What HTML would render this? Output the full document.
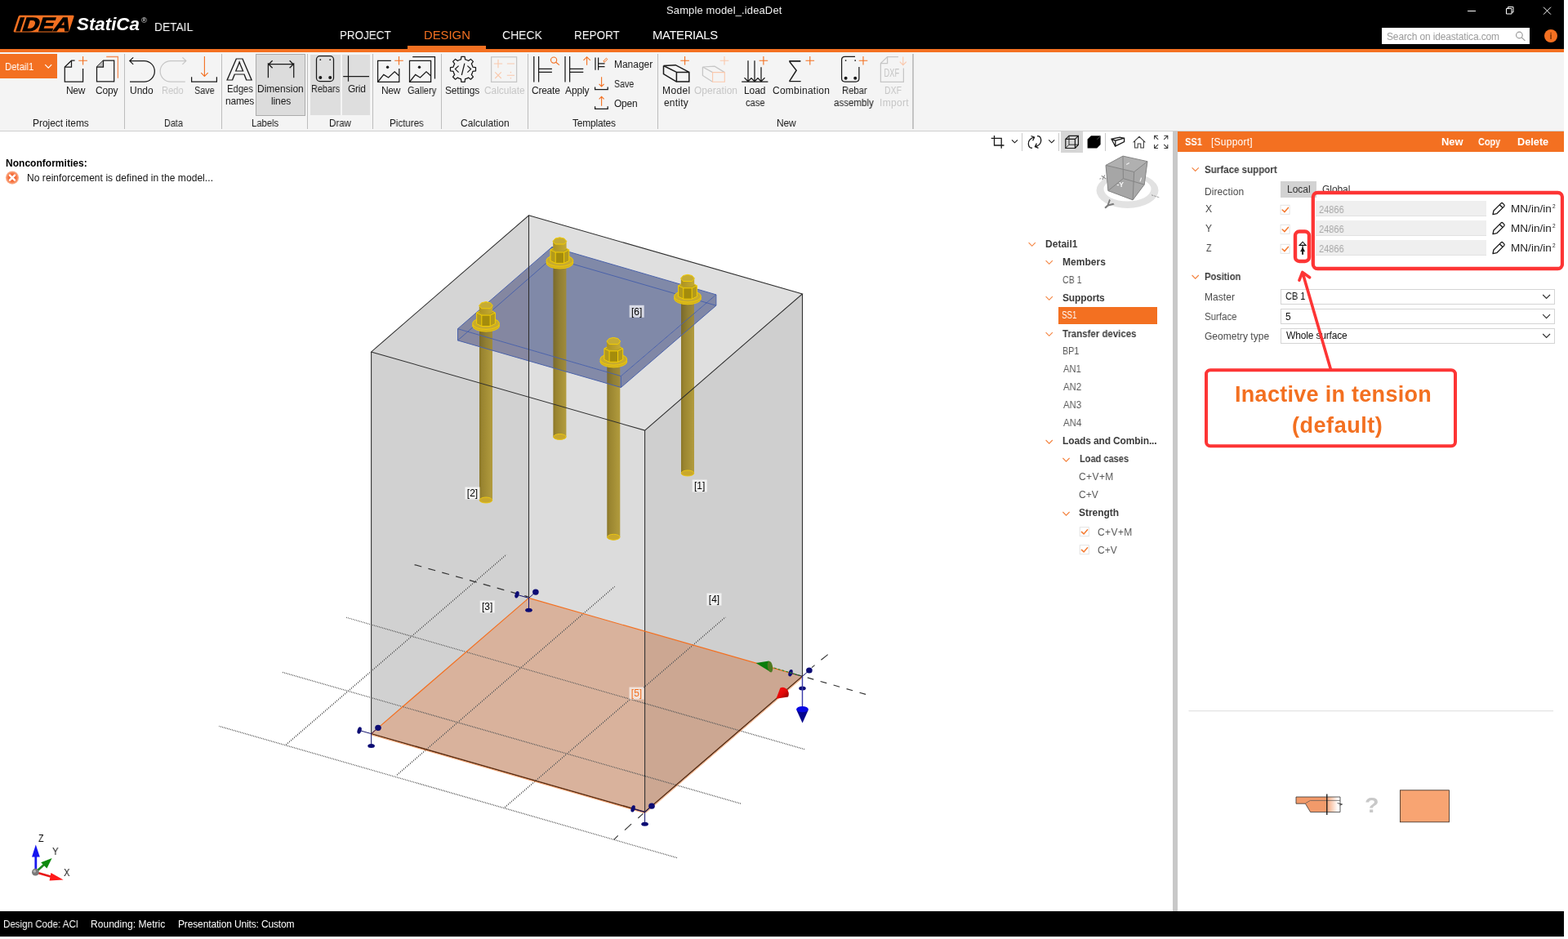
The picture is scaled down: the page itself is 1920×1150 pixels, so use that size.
<!DOCTYPE html>
<html lang="en">
<head>
<meta charset="utf-8">
<title>Sample model_.ideaDet - IDEA StatiCa Detail</title>
<style>
*{box-sizing:content-box}
html,body{margin:0;padding:0;background:#fff}
body{width:1920px;height:1150px;position:relative;overflow:hidden;font-family:"Liberation Sans",sans-serif;font-size:12px;color:#000}
#app{position:absolute;left:0;top:0;width:1915px;height:1147px;overflow:hidden;background:#fff}
.t,svg{will-change:transform}
#app>*,#app div,#app span,#app a,#app sup,#app svg,#app nav{position:absolute}
.t{white-space:nowrap;line-height:1;margin:0;padding:0;text-decoration:none;transform-origin:0 0}
svg{overflow:visible}
svg text{font-family:"Liberation Sans",sans-serif}
#splitter{left:1435.6px;top:161px;width:6.2px;height:955px;background:#c8c8c8}
</style>
</head>
<body>
<div id="app">
<header id="titlebar" style="left:0px;top:0px;width:1915px;height:64px;background:#000;">
<div style="left:0px;top:60px;width:1915px;height:4px;background:#f37021;"></div>
<svg class="a" style="left:0px;top:0px;" width="200" height="60" viewBox="0 0 200 60" ><g transform="translate(12.88 0) skewX(-18.1)"><rect x="16.2" y="18.8" width="68.1" height="20.6" rx="1.6" fill="#f37021"/><text x="17.8" y="37.9" font-size="23.4" font-weight="700" fill="#000" stroke="#000" stroke-width="1.2" stroke-linejoin="miter" textLength="66.2" lengthAdjust="spacingAndGlyphs">IDEA</text></g></svg>
<span class="t logo" style="left:94.14px;top:19.25px;font-size:21.2px;font-weight:700;color:#fff;font-style:italic;transform:scaleX(1.0536);">StatiCa</span>
<span class="t" style="left:172.6px;top:19.96px;font-size:9.5px;color:#e6e6e6;">®</span>
<span class="t" style="left:188.72px;top:26.17px;font-size:14.8px;color:#fff;transform:scaleX(0.9316);">DETAIL</span>
<span class="t wtitle" style="left:816.4px;top:5.7px;font-size:13px;color:#f0f0f0;letter-spacing:0.13px;">Sample model_.ideaDet</span>
<nav id="tabs" style="left:400px;top:28px;width:500px;height:32px;">
<a class="t tab" style="left:16.03px;top:8.17px;font-size:14.8px;color:#fff;transform:scaleX(0.9083);">PROJECT</a>
<a class="t tab" style="left:119.4px;top:8.17px;font-size:14.8px;color:#f37021;letter-spacing:0.02px;">DESIGN</a>
<a class="t tab" style="left:215.22px;top:8.17px;font-size:14.8px;color:#fff;transform:scaleX(0.9428);">CHECK</a>
<a class="t tab" style="left:303.43px;top:8.17px;font-size:14.8px;color:#fff;transform:scaleX(0.9077);">REPORT</a>
<a class="t tab" style="left:399.4px;top:8.17px;font-size:14.8px;color:#fff;letter-spacing:-0.34px;">MATERIALS</a>
<div style="left:99px;top:28px;width:96px;height:4px;background:#f37021;"></div>
</nav>

<svg class="a" style="left:1780px;top:0px;" width="135" height="30" viewBox="1780 0 135 30" ><g fill="none" stroke="#fff" stroke-width="1"><path d="M1797 13.5H1807"/><path d="M1844.5 10.5h6.5v6.5h-6.5z M1846.5 10.5v-2h6.5v6.5h-2"/><path d="M1890 8.7l9 9M1899 8.7l-9 9"/></g></svg>
<div class="search" style="left:1692px;top:34px;width:181px;height:20px;background:#fff;"></div>
<span class="t" style="left:1697.7px;top:38.64px;font-size:12px;color:#9b9b9b;letter-spacing:-0.14px;">Search on ideastatica.com</span>
<svg class="a" style="left:1850px;top:30px;" width="65" height="30" viewBox="1850 30 65 30" ><g fill="none" stroke="#9a9a9a" stroke-width="1.2"><circle cx="1860.4" cy="43" r="3.8"/><path d="M1863.2 45.9l4.2 4"/></g><circle cx="1899" cy="44" r="8" fill="#f37021"/><text x="1899.1" y="48.2" text-anchor="middle" font-size="11.2" font-weight="700" fill="#7a3205">i</text></svg>
</header>
<section id="ribbon" style="left:0px;top:64px;width:1915px;height:97px;background:#f4f4f4;">
<div style="left:0px;top:96px;width:1915px;height:1px;background:#cfcfcf;"></div>
<div class="combo" style="left:0px;top:2px;width:70px;height:30px;background:#f37021;"></div>
<span class="t" style="left:6.12px;top:12.04px;font-size:12px;color:#fff;transform:scaleX(0.9428);">Detail1</span>
<div style="left:313px;top:2px;width:61px;height:76px;background:#dcdcdc;border:1px solid #ababab;box-sizing:border-box;"></div>
<div style="left:380px;top:3px;width:37px;height:74px;background:#dedede;"></div>
<div style="left:419px;top:3px;width:34px;height:74px;background:#dedede;"></div>
<div style="left:152px;top:2px;width:1px;height:91.5px;background:#bdbdbd;"></div>
<div style="left:271px;top:2px;width:1px;height:91.5px;background:#bdbdbd;"></div>
<div style="left:376px;top:2px;width:1px;height:91.5px;background:#bdbdbd;"></div>
<div style="left:456px;top:2px;width:1px;height:91.5px;background:#bdbdbd;"></div>
<div style="left:540px;top:2px;width:1px;height:91.5px;background:#bdbdbd;"></div>
<div style="left:646px;top:2px;width:1px;height:91.5px;background:#bdbdbd;"></div>
<div style="left:805px;top:2px;width:1px;height:91.5px;background:#bdbdbd;"></div>
<div style="left:1117px;top:2px;width:2px;height:91.5px;background:#c4c4c4;"></div>
<svg class="a" style="left:0px;top:0px;" width="1915" height="97" viewBox="0 64 1915 97" ><g fill="none" stroke="#1a1a1a" stroke-width="1.25" stroke-linejoin="miter"><path d="M91.6 74.2H87.5L79.3 82V100.1H101.6V84"/><path d="M87.5 74.2V82H79.3"/><path d="M126.5 74.2H139.7V99.8H118.5V82Z"/><path d="M126.5 74.2V82H118.5" fill="#bdbdbd"/><path d="M163.2 70.4L158.8 74.6L163.2 78.9M158.8 74.6H176.6A12.75 12.75 0 0 1 176.6 100.1H159"/><path d="M234.6 94.3V100.1H265.4V94.3"/><path d="M328.4 77.2V95.3M359.7 77.2V95.3M328.8 78.7H359.3M333.6 74.2L329 78.7L333.6 83.2M354.6 74.2L359.2 78.7L354.6 83.2"/><rect x="387.5" y="68.6" width="21" height="31" rx="4.2"/><path d="M426.5 68.3V99.7M420.2 93.5H452"/><path d="M478.8 74.3H462.6V100.3H488.8V84"/><path d="M462.9 100L469.8 91.4L475.6 95L483.2 87.8L488.6 92.8"/><path d="M501.5 74.3H527.6V100.3H501.5Z"/><path d="M501.8 100L508.7 91.4L514.5 95L522 87.8L527.4 92.8"/><path d="M505.2 69.5H532.5V96.5"/><path d="M564.4 72.9L564.9 69.3L569.1 69.3L569.6 72.9A12.2 12.2 0 0 1 573.6 74.5L576.4 72.4L579.4 75.4L577.3 78.2A12.2 12.2 0 0 1 578.9 82.2L582.5 82.7L582.5 86.9L578.9 87.4A12.2 12.2 0 0 1 577.3 91.4L579.4 94.2L576.4 97.2L573.6 95.1A12.2 12.2 0 0 1 569.6 96.7L569.1 100.3L564.9 100.3L564.4 96.7A12.2 12.2 0 0 1 560.4 95.1L557.6 97.2L554.6 94.2L556.7 91.4A12.2 12.2 0 0 1 555.1 87.4L551.5 86.9L551.5 82.7L555.1 82.2A12.2 12.2 0 0 1 556.7 78.2L554.6 75.4L557.6 72.4L560.4 74.5A12.2 12.2 0 0 1 564.4 72.9Z" stroke-linejoin="round"/><path d="M561.6 80.6L557.4 84.6L561.6 88.6M572.4 80.6L576.6 84.6L572.4 88.6M568.9 77.6L565.3 92"/><path d="M653.8 69V100.5M659.6 69V100.5M659.6 84.4H675.9M659.6 88.4H675.9"/><path d="M692 69V100.5M697.6 69V100.5M697.6 84.4H714.3M697.6 88.4H714.3"/><path d="M729 70.5V85.8M732.6 70.5V85.8M732.6 77.8H740.5M732.6 81.6H740.5"/><path d="M728.6 106.6V109.6H744.2V106.6"/><path d="M728.6 130.2V133.3H744.2V130.2"/><path d="M828.4 88.4H843.8V100.1H828.4Z M812.5 80.5L827.2 79.7L843.8 88.4M812.5 80.5L828.4 88.4M812.5 80.5V90.6L828.4 100.1" stroke-width="1.5"/><path d="M916 74.2V99.4M924 74.2V99.4M932 82.2V99.4M908.2 100.1H940.4M911.5 95.2L916 99.6L920 95.7L924 99.6L928 95.7L932 99.6L936.5 95.2"/><path d="M1047 69.3H1034.6Q1030.6 69.3 1030.6 73.3V96.1Q1030.6 100.1 1034.6 100.1H1047.9Q1051.9 100.1 1051.9 96.1V82"/></g><text transform="translate(276.9 97.6) scale(1.19 1)" font-size="37.6" font-weight="700" fill="none" stroke="#1a1a1a" stroke-width="1.15" stroke-linejoin="miter">A</text><text transform="translate(963.2 100.2) scale(0.87 1)" style="font-family:'DejaVu Sans Light','DejaVu Sans',sans-serif;font-weight:200" font-size="35.2" fill="#1a1a1a">Σ</text><g fill="#1a1a1a"><circle cx="392.3" cy="73.2" r="0.9"/><circle cx="404.2" cy="73.2" r="0.9"/><circle cx="392.3" cy="95" r="2"/><circle cx="404.2" cy="95" r="2"/><circle cx="474.6" cy="82.3" r="1.7"/><circle cx="513.5" cy="82.3" r="1.7"/><circle cx="1035.6" cy="74.1" r="0.9"/><circle cx="1047.2" cy="74.1" r="0.9"/><circle cx="1035.6" cy="95.7" r="2"/><circle cx="1047.2" cy="95.7" r="2"/></g><g fill="none" stroke="#c6c6c6" stroke-width="1.25"><path d="M223.4 70.4L227.8 74.6L223.4 78.9M227.8 74.6H208.9A12.75 12.75 0 0 0 208.9 100.1H226.8"/><rect x="601.6" y="69.8" width="31" height="30.6"/><path d="M860.4 82L875 81.2L887.3 88.6M860.4 82L872.6 88.6M860.4 82V92.5L872.6 100.2"/><path d="M1100 69.6H1086.6L1078.4 77.6V100.3H1106.4V83.5"/><path d="M1086.6 69.6V77.6H1078.4"/></g><g fill="none" stroke="#f37021" stroke-width="1.1"><path d="M250.4 69V93.3M246.2 89.2L250.4 93.5L254.7 89.2"/><path d="M130.2 69.5H144.4V95.7" stroke="#f5905a" stroke-width="1.3"/><circle cx="678.1" cy="73.6" r="3.6"/><path d="M680.7 76.2L684.9 79.6"/><path d="M718.6 79.8V69.6M714.5 73.9L718.6 69.7L722.8 73.9"/><path d="M736.6 94.3V105.8M733.6 102.9L736.6 106L739.6 102.9"/><path d="M736.6 129.7V118.5M733.6 121.4L736.6 118.3L739.6 121.4"/><path d="M738.8 75L742.4 71.2L743.8 72.5L740.2 76.3Z" stroke-width="1"/></g><path d="M96.3 74.3H106.9M101.6 69V79.6" stroke="#f37021" stroke-width="1.1" fill="none"/><path d="M483.2 74.3H493.8M488.5 69V79.6" stroke="#f37021" stroke-width="1.1" fill="none"/><path d="M833.3 74.3H843.9M838.6 69V79.6" stroke="#f37021" stroke-width="1.1" fill="none"/><path d="M929.6 74.3H940.2M934.9 69V79.6" stroke="#f37021" stroke-width="1.1" fill="none"/><path d="M986.5 74.3H997.1M991.8 69V79.6" stroke="#f37021" stroke-width="1.1" fill="none"/><path d="M1051.7 74.3H1062.3M1057 69V79.6" stroke="#f37021" stroke-width="1.1" fill="none"/><g fill="none" stroke="#fac8ac" stroke-width="1.1"><path d="M604.8 78H615.2M610 72.8V83.2M620.8 78H630M606.2 88.4L613.8 96M613.8 88.4L606.2 96M620.8 92.2H630"/><path d="M872.6 88.6H887.3V100.2H872.6Z"/><path d="M1105.8 69.5V79.5M1101.8 75.6L1105.8 79.7L1109.8 75.6"/></g><circle cx="625.4" cy="88.6" r="0.8" fill="#fac8ac"/><circle cx="625.4" cy="95.8" r="0.8" fill="#fac8ac"/><path d="M881.7 74.3H892.3M887 69V79.6" stroke="#fac8ac" stroke-width="1.1" fill="none"/><text x="1082.6" y="93.9" font-size="14.6" fill="#c6c6c6" textLength="18.6" lengthAdjust="spacingAndGlyphs">DXF</text><path d="M55.2 79.2L59.2 83.2L63.2 79.2" fill="none" stroke="#fff" stroke-width="1.2"/></svg>
<span class="t rl" style="left:81.4px;top:40.94px;font-size:12px;color:#1a1a1a;letter-spacing:-0.35px;">New</span>
<span class="t rl" style="left:117.2px;top:40.94px;font-size:12px;color:#1a1a1a;letter-spacing:-0.17px;">Copy</span>
<span class="t rl" style="left:159.4px;top:40.94px;font-size:12px;color:#1a1a1a;">Undo</span>
<span class="t rl" style="left:198.32px;top:40.94px;font-size:12px;color:#c6c6c6;transform:scaleX(0.9278);">Redo</span>
<span class="t rl" style="left:237.73px;top:40.94px;font-size:12px;color:#1a1a1a;transform:scaleX(0.8989);">Save</span>
<span class="t rl" style="left:278.02px;top:39.04px;font-size:12px;color:#1a1a1a;transform:scaleX(0.9388);">Edges</span>
<span class="t rl" style="left:276.3px;top:53.64px;font-size:12px;color:#1a1a1a;letter-spacing:-0.2px;">names</span>
<span class="t rl" style="left:315.3px;top:39.04px;font-size:12px;color:#1a1a1a;letter-spacing:0.01px;">Dimension</span>
<span class="t rl" style="left:332.1px;top:53.64px;font-size:12px;color:#1a1a1a;letter-spacing:-0.12px;">lines</span>
<span class="t rl" style="left:381.33px;top:39.04px;font-size:12px;color:#1a1a1a;transform:scaleX(0.9072);">Rebars</span>
<span class="t rl" style="left:425.5px;top:39.04px;font-size:12px;color:#1a1a1a;letter-spacing:-0.23px;">Grid</span>
<span class="t rl" style="left:466.6px;top:40.94px;font-size:12px;color:#1a1a1a;letter-spacing:-0.35px;">New</span>
<span class="t rl" style="left:499.42px;top:40.94px;font-size:12px;color:#1a1a1a;transform:scaleX(0.9284);">Gallery</span>
<span class="t rl" style="left:545.1px;top:40.94px;font-size:12px;color:#1a1a1a;letter-spacing:-0.16px;">Settings</span>
<span class="t rl" style="left:592.5px;top:40.94px;font-size:12px;color:#c6c6c6;letter-spacing:-0.05px;">Calculate</span>
<span class="t rl" style="left:651.3px;top:40.94px;font-size:12px;color:#1a1a1a;letter-spacing:-0.24px;">Create</span>
<span class="t rl" style="left:692.4px;top:40.94px;font-size:12px;color:#1a1a1a;letter-spacing:-0.1px;">Apply</span>
<span class="t rl" style="left:752.3px;top:8.74px;font-size:12px;color:#1a1a1a;letter-spacing:-0.03px;">Manager</span>
<span class="t rl" style="left:752.33px;top:32.54px;font-size:12px;color:#1a1a1a;transform:scaleX(0.8839);">Save</span>
<span class="t rl" style="left:752.3px;top:56.54px;font-size:12px;color:#1a1a1a;letter-spacing:-0.23px;">Open</span>
<span class="t rl" style="left:810.7px;top:40.94px;font-size:12px;color:#1a1a1a;letter-spacing:0.38px;">Model</span>
<span class="t rl" style="left:813.3px;top:56.24px;font-size:12px;color:#1a1a1a;letter-spacing:0.2px;">entity</span>
<span class="t rl" style="left:849.7px;top:40.94px;font-size:12px;color:#c6c6c6;letter-spacing:0.04px;">Operation</span>
<span class="t rl" style="left:911.3px;top:40.94px;font-size:12px;color:#1a1a1a;letter-spacing:-0.07px;">Load</span>
<span class="t rl" style="left:913.42px;top:56.24px;font-size:12px;color:#1a1a1a;transform:scaleX(0.9271);">case</span>
<span class="t rl" style="left:945.5px;top:40.94px;font-size:12px;color:#1a1a1a;letter-spacing:0.26px;">Combination</span>
<span class="t rl" style="left:1030.62px;top:40.94px;font-size:12px;color:#1a1a1a;transform:scaleX(0.9369);">Rebar</span>
<span class="t rl" style="left:1021.41px;top:56.24px;font-size:12px;color:#1a1a1a;transform:scaleX(0.9625);">assembly</span>
<span class="t rl" style="left:1083.44px;top:40.94px;font-size:12px;color:#c6c6c6;transform:scaleX(0.8692);">DXF</span>
<span class="t rl" style="left:1076.6px;top:56.24px;font-size:12px;color:#c6c6c6;letter-spacing:0.32px;">Import</span>
<span class="t gl" style="left:40.1px;top:80.74px;font-size:12px;color:#1a1a1a;letter-spacing:-0.04px;">Project items</span>
<span class="t gl" style="left:200.53px;top:80.74px;font-size:12px;color:#1a1a1a;transform:scaleX(0.9028);">Data</span>
<span class="t gl" style="left:308.12px;top:80.74px;font-size:12px;color:#1a1a1a;transform:scaleX(0.9395);">Labels</span>
<span class="t gl" style="left:403.11px;top:80.74px;font-size:12px;color:#1a1a1a;transform:scaleX(0.9603);">Draw</span>
<span class="t gl" style="left:477.21px;top:80.74px;font-size:12px;color:#1a1a1a;transform:scaleX(0.9649);">Pictures</span>
<span class="t gl" style="left:563.5px;top:80.74px;font-size:12px;color:#1a1a1a;letter-spacing:0.02px;">Calculation</span>
<span class="t gl" style="left:700.7px;top:80.74px;font-size:12px;color:#1a1a1a;letter-spacing:-0.21px;">Templates</span>
<span class="t gl" style="left:950.7px;top:80.74px;font-size:12px;color:#1a1a1a;letter-spacing:-0.2px;">New</span>
</section>
<main id="viewport" style="left:0px;top:161px;width:1436px;height:955px;background:#fff;">
<div class="a" style="left:1352.5px;top:2.4px;width:1px;height:21.5px;background:#c9c9c9"></div>
<div class="a" style="left:1295.5px;top:2.4px;width:1px;height:21.5px;background:#c9c9c9"></div>
<div class="a" style="left:1250.5px;top:2.4px;width:1px;height:21.5px;background:#c9c9c9"></div>
<div class="a" style="left:1298.7px;top:0;width:27px;height:25.6px;background:#d6d6d6"></div>
<svg class="a" style="left:0px;top:0px;" width="1436" height="955" viewBox="0 161 1436 955" id="scene"><defs><linearGradient id="rod" x1="0" x2="1" y1="0" y2="0"><stop offset="0" stop-color="#8a7628"/><stop offset="0.22" stop-color="#9a8530"/><stop offset="1" stop-color="#b29c3e"/></linearGradient><linearGradient id="rodp" x1="0" x2="1" y1="0" y2="0"><stop offset="0" stop-color="#7a6a2c"/><stop offset="0.5" stop-color="#917f34"/><stop offset="1" stop-color="#9f8b3c"/></linearGradient><linearGradient id="tip" x1="0" x2="1" y1="0" y2="0"><stop offset="0" stop-color="#ac9220"/><stop offset="1" stop-color="#c4aa34"/></linearGradient><pattern id="dots" width="2" height="2" patternUnits="userSpaceOnUse"><rect width="1" height="2" fill="#5a5a5a"/></pattern><linearGradient id="redc" x1="0" x2="1" y1="0" y2="1"><stop offset="0" stop-color="#ff1212"/><stop offset="0.55" stop-color="#e00808"/><stop offset="1" stop-color="#7c0000"/></linearGradient></defs><polygon points="647.5,263.8 982.5,359.9 982.5,828.3 789.6,994.5 454.6,898.6 454.6,430.9" fill="#dcdcdc"/><polygon points="454.6,430.9 647.5,263.8 647.5,732.4 454.6,898.6" fill="#d1d1d1"/><polygon points="647.5,263.8 982.5,359.9 789.6,527.1 454.6,430.9" fill="#fff" fill-opacity="0.1"/><polygon points="647.5,732.4 982.5,828.3 789.6,994.5 454.6,898.6" fill="#d9b29c"/><polygon points="789.6,527.1 982.5,359.9 982.5,828.3 789.6,994.5" fill="#000" fill-opacity="0.06"/><g stroke="url(#dots)" stroke-width="1.3" fill="none"><line x1="423.3" y1="756" x2="985" y2="917.7" /><line x1="346" y1="823.3" x2="907.7" y2="984.3" /><line x1="268.3" y1="889.3" x2="829.3" y2="1050.7" /><line x1="350" y1="912.3" x2="620" y2="679.3" /><line x1="485" y1="950" x2="752.7" y2="718.3" /><line x1="616.7" y1="990" x2="888.3" y2="755.7" /></g><g stroke="#333" stroke-width="1.15" fill="none"><line x1="507.6" y1="691.6" x2="646.7" y2="730.9" stroke-dasharray="9 8.5"/><line x1="988.7" y1="829.9" x2="1060.6" y2="850.5" stroke-dasharray="7.9 8.7"/><line x1="993.9" y1="817.6" x2="997.6" y2="814.6" /><line x1="1005.4" y1="808.2" x2="1013.7" y2="801.6" /><line x1="787.5" y1="996.3" x2="781.3" y2="1002" /><line x1="773.1" y1="1009.2" x2="765" y2="1016.7" /><line x1="756.7" y1="1023.3" x2="751.7" y2="1028.3" /></g><path d="M677.4 319.2V535A8.0 3.6 0 0 0 693.4 535V319.2Z" fill="url(#rod)"/><ellipse cx="685.4" cy="535" rx="7.7" ry="3.5" fill="#c9a82c" stroke="#efca10" stroke-width="0.9"/><path d="M834 363V579.5A8.0 3.6 0 0 0 850 579.5V363Z" fill="url(#rod)"/><ellipse cx="842" cy="579.5" rx="7.7" ry="3.5" fill="#c9a82c" stroke="#efca10" stroke-width="0.9"/><path d="M587 396.3V612.5A8.0 3.6 0 0 0 603 612.5V396.3Z" fill="url(#rod)"/><ellipse cx="595" cy="612.5" rx="7.7" ry="3.5" fill="#c9a82c" stroke="#efca10" stroke-width="0.9"/><path d="M743.3 440.1V657.8A8.0 3.6 0 0 0 759.3 657.8V440.1Z" fill="url(#rod)"/><ellipse cx="751.3" cy="657.8" rx="7.7" ry="3.5" fill="#c9a82c" stroke="#efca10" stroke-width="0.9"/><clipPath id="cpl"><polygon points="560.5,402.7 676,302.4 876.9,360.9 876.9,374.2 760.4,474.5 560.5,416.9"/></clipPath><polygon points="560.5,402.7 760.4,460.6 760.4,474.5 560.5,416.9" fill="#838aa8"/><polygon points="760.4,460.6 876.9,360.9 876.9,374.2 760.4,474.5" fill="#8087a6"/><polygon points="560.5,402.7 676,302.4 876.9,360.9 760.4,460.6" fill="#8089a8"/><rect x="540" y="290" width="107.7" height="200" fill="#b47c64" fill-opacity="0.09" clip-path="url(#cpl)"/><g clip-path="url(#cpl)"><rect x="677.4" y="319.2" width="16" height="215.8" fill="url(#rodp)"/><rect x="834" y="363" width="16" height="216.5" fill="url(#rodp)"/><rect x="587" y="396.3" width="16" height="216.2" fill="url(#rodp)"/><rect x="743.3" y="440.1" width="16" height="217.7" fill="url(#rodp)"/></g><g fill="none" stroke="#4a62aa" stroke-width="1"><polygon points="560.5,402.7 676,302.4 876.9,360.9 760.4,460.6"/><polyline points="560.5,402.7 560.5,416.9 760.4,474.5 876.9,374.2 876.9,360.9"/><line x1="760.4" y1="460.6" x2="760.4" y2="474.5" /><polyline points="560.5,416.9 676,316 876.9,374.2"/><line x1="676" y1="302.4" x2="676" y2="316" /></g><ellipse cx="685.4" cy="321.8" rx="16.5" ry="7.2" fill="#cfae22" stroke="#f3cd05" stroke-width="0.9"/><ellipse cx="685.4" cy="319.2" rx="16.5" ry="7.2" fill="#c9ac2c" stroke="#f3cd05" stroke-width="0.9"/><path d="M674 306V319.4L680.2 322.4H690.6L696.8 319.4V306Z" fill="#b39a1c"/><path d="M680.2 309H690.6V322.4H680.2Z" fill="#a48c0c"/><path d="M674 306L680.2 309H690.6L696.8 306L690.6 302.6H680.2Z" fill="#b8a024"/><path d="M674 306V319.4L680.2 322.4H690.6L696.8 319.4V306L690.6 302.6H680.2ZM674 306L680.2 309H690.6L696.8 306M680.2 309V322.4M690.6 309V322.4" fill="none" stroke="#f3cd05" stroke-width="1" stroke-linejoin="round"/><path d="M677.2 295.4V303.8A8.2 3.6 0 0 0 693.6 303.8V295.4Z" fill="url(#tip)"/><path d="M677 295.4L680 292L685.4 290.8L690.8 292L693.8 295.4L690.8 299H680Z" fill="#c6ac34" stroke="#f3cd05" stroke-width="1" stroke-linejoin="round"/><ellipse cx="842" cy="365.6" rx="16.5" ry="7.2" fill="#cfae22" stroke="#f3cd05" stroke-width="0.9"/><ellipse cx="842" cy="363" rx="16.5" ry="7.2" fill="#c9ac2c" stroke="#f3cd05" stroke-width="0.9"/><path d="M830.6 349.8V363.2L836.8 366.2H847.2L853.4 363.2V349.8Z" fill="#b39a1c"/><path d="M836.8 352.8H847.2V366.2H836.8Z" fill="#a48c0c"/><path d="M830.6 349.8L836.8 352.8H847.2L853.4 349.8L847.2 346.4H836.8Z" fill="#b8a024"/><path d="M830.6 349.8V363.2L836.8 366.2H847.2L853.4 363.2V349.8L847.2 346.4H836.8ZM830.6 349.8L836.8 352.8H847.2L853.4 349.8M836.8 352.8V366.2M847.2 352.8V366.2" fill="none" stroke="#f3cd05" stroke-width="1" stroke-linejoin="round"/><path d="M833.8 340.9V347.6A8.2 3.6 0 0 0 850.2 347.6V340.9Z" fill="url(#tip)"/><path d="M833.6 340.9L836.6 337.5L842 336.3L847.4 337.5L850.4 340.9L847.4 344.5H836.6Z" fill="#c6ac34" stroke="#f3cd05" stroke-width="1" stroke-linejoin="round"/><ellipse cx="595" cy="398.9" rx="16.5" ry="7.2" fill="#cfae22" stroke="#f3cd05" stroke-width="0.9"/><ellipse cx="595" cy="396.3" rx="16.5" ry="7.2" fill="#c9ac2c" stroke="#f3cd05" stroke-width="0.9"/><path d="M583.6 383.1V396.5L589.8 399.5H600.2L606.4 396.5V383.1Z" fill="#b39a1c"/><path d="M589.8 386.1H600.2V399.5H589.8Z" fill="#a48c0c"/><path d="M583.6 383.1L589.8 386.1H600.2L606.4 383.1L600.2 379.7H589.8Z" fill="#b8a024"/><path d="M583.6 383.1V396.5L589.8 399.5H600.2L606.4 396.5V383.1L600.2 379.7H589.8ZM583.6 383.1L589.8 386.1H600.2L606.4 383.1M589.8 386.1V399.5M600.2 386.1V399.5" fill="none" stroke="#f3cd05" stroke-width="1" stroke-linejoin="round"/><path d="M586.8 374.2V380.9A8.2 3.6 0 0 0 603.2 380.9V374.2Z" fill="url(#tip)"/><path d="M586.6 374.2L589.6 370.8L595 369.6L600.4 370.8L603.4 374.2L600.4 377.8H589.6Z" fill="#c6ac34" stroke="#f3cd05" stroke-width="1" stroke-linejoin="round"/><ellipse cx="751.3" cy="442.7" rx="16.5" ry="7.2" fill="#cfae22" stroke="#f3cd05" stroke-width="0.9"/><ellipse cx="751.3" cy="440.1" rx="16.5" ry="7.2" fill="#c9ac2c" stroke="#f3cd05" stroke-width="0.9"/><path d="M739.9 426.9V440.3L746.1 443.3H756.5L762.7 440.3V426.9Z" fill="#b39a1c"/><path d="M746.1 429.9H756.5V443.3H746.1Z" fill="#a48c0c"/><path d="M739.9 426.9L746.1 429.9H756.5L762.7 426.9L756.5 423.5H746.1Z" fill="#b8a024"/><path d="M739.9 426.9V440.3L746.1 443.3H756.5L762.7 440.3V426.9L756.5 423.5H746.1ZM739.9 426.9L746.1 429.9H756.5L762.7 426.9M746.1 429.9V443.3M756.5 429.9V443.3" fill="none" stroke="#f3cd05" stroke-width="1" stroke-linejoin="round"/><path d="M743.1 418V424.7A8.2 3.6 0 0 0 759.5 424.7V418Z" fill="url(#tip)"/><path d="M742.9 418L745.9 414.6L751.3 413.4L756.7 414.6L759.7 418L756.7 421.6H745.9Z" fill="#c6ac34" stroke="#f3cd05" stroke-width="1" stroke-linejoin="round"/><g stroke="#2e2e2e" stroke-width="1.05" fill="none"><polygon points="647.5,263.8 982.5,359.9 789.6,527.1 454.6,430.9"/><line x1="647.5" y1="263.8" x2="647.5" y2="732.4" /><line x1="982.5" y1="359.9" x2="982.5" y2="828.3" /><line x1="789.6" y1="527.1" x2="789.6" y2="994.5" /><line x1="454.6" y1="430.9" x2="454.6" y2="898.6" /></g><g stroke="#f37021" stroke-width="1.2" fill="none"><line x1="454.6" y1="898.6" x2="647.5" y2="732.4" /><line x1="647.5" y1="732.4" x2="982.5" y2="828.3" /></g><g stroke="#5a2c10" stroke-width="1.5" fill="none"><line x1="454.6" y1="898.6" x2="789.6" y2="994.5" /><line x1="789.6" y1="994.5" x2="982.5" y2="828.3" /></g><g stroke="#f37021" stroke-width="0.8" fill="none" opacity="0.8"><line x1="454.6" y1="899.9" x2="789.6" y2="995.8" /><line x1="790.6" y1="995.5" x2="983.5" y2="829.3" /></g><line x1="647.5" y1="732.4" x2="633" y2="728.3" stroke="#14146e" stroke-width="1"/><ellipse cx="633" cy="728.3" rx="2.4" ry="4.3" fill="#0c0c74" transform="rotate(18 633 728.3)"/><line x1="647.5" y1="732.4" x2="655.9" y2="725.1" stroke="#14146e" stroke-width="1"/><ellipse cx="655.9" cy="725.1" rx="3.8" ry="3.6" fill="#0c0c74" transform="rotate(0 655.9 725.1)"/><line x1="647.5" y1="732.4" x2="647.5" y2="747.2" stroke="#14146e" stroke-width="1"/><ellipse cx="647.5" cy="747.2" rx="4.3" ry="2.5" fill="#0c0c74" transform="rotate(0 647.5 747.2)"/><line x1="454.6" y1="898.6" x2="440.1" y2="894.5" stroke="#14146e" stroke-width="1"/><ellipse cx="440.1" cy="894.5" rx="2.4" ry="4.3" fill="#0c0c74" transform="rotate(18 440.1 894.5)"/><line x1="454.6" y1="898.6" x2="463" y2="891.3" stroke="#14146e" stroke-width="1"/><ellipse cx="463" cy="891.3" rx="3.8" ry="3.6" fill="#0c0c74" transform="rotate(0 463 891.3)"/><line x1="454.6" y1="898.6" x2="454.6" y2="913.4" stroke="#14146e" stroke-width="1"/><ellipse cx="454.6" cy="913.4" rx="4.3" ry="2.5" fill="#0c0c74" transform="rotate(0 454.6 913.4)"/><line x1="789.6" y1="994.5" x2="775.1" y2="990.4" stroke="#14146e" stroke-width="1"/><ellipse cx="775.1" cy="990.4" rx="2.4" ry="4.3" fill="#0c0c74" transform="rotate(18 775.1 990.4)"/><line x1="789.6" y1="994.5" x2="798" y2="987.2" stroke="#14146e" stroke-width="1"/><ellipse cx="798" cy="987.2" rx="3.8" ry="3.6" fill="#0c0c74" transform="rotate(0 798 987.2)"/><line x1="789.6" y1="994.5" x2="789.6" y2="1009.3" stroke="#14146e" stroke-width="1"/><ellipse cx="789.6" cy="1009.3" rx="4.3" ry="2.5" fill="#0c0c74" transform="rotate(0 789.6 1009.3)"/><line x1="982.5" y1="828.3" x2="968" y2="824.2" stroke="#14146e" stroke-width="1"/><ellipse cx="968" cy="824.2" rx="2.4" ry="4.3" fill="#0c0c74" transform="rotate(18 968 824.2)"/><line x1="982.5" y1="828.3" x2="990.9" y2="821" stroke="#14146e" stroke-width="1"/><ellipse cx="990.9" cy="821" rx="3.8" ry="3.6" fill="#0c0c74" transform="rotate(0 990.9 821)"/><line x1="982.5" y1="828.3" x2="982.5" y2="843.1" stroke="#14146e" stroke-width="1"/><ellipse cx="982.5" cy="843.1" rx="4.3" ry="2.5" fill="#0c0c74" transform="rotate(0 982.5 843.1)"/><line x1="982.5" y1="829" x2="982.5" y2="867" stroke="#3a3aa8" stroke-width="1.4"/><path d="M975.2 869.2L982.6 885.6L989.9 869.2Z" fill="#04048c"/><ellipse cx="982.5" cy="868.6" rx="7.3" ry="3.6" fill="#0808e4"/><line x1="943" y1="816.6" x2="982" y2="828" stroke="#2a8a2a" stroke-width="1.1" stroke-dasharray="3 2"/><path d="M925.6 811.9L941.6 809.6L944.4 823.4Z" fill="#0a7c0c"/><ellipse cx="943" cy="816.5" rx="3.1" ry="6.9" fill="#4f7a22" transform="rotate(-10 943 816.5)"/><path d="M950.4 855.8L955.4 842.4Q960.4 840.2 964.6 845.4Q966.8 849.6 965 853.4Z" fill="url(#redc)"/><g font-family="Liberation Sans, sans-serif"><rect x="770.7" y="373.8" width="18" height="15" fill="#dfe1ea" opacity="0.92"/><text x="779.7" y="385.6" font-size="12" text-anchor="middle" fill="#000">[6]</text><rect x="569.5" y="596.5" width="18" height="15" fill="#f4f4f4" opacity="0.92"/><text x="578.5" y="608.3" font-size="12" text-anchor="middle" fill="#000">[2]</text><rect x="847.7" y="587.5" width="18" height="15" fill="#f4f4f4" opacity="0.92"/><text x="856.7" y="599.3" font-size="12" text-anchor="middle" fill="#000">[1]</text><rect x="587.7" y="735.5" width="18" height="15" fill="#f4f4f4" opacity="0.92"/><text x="596.7" y="747.3" font-size="12" text-anchor="middle" fill="#000">[3]</text><rect x="865.5" y="726.5" width="18" height="15" fill="#f4f4f4" opacity="0.92"/><text x="874.5" y="738.3" font-size="12" text-anchor="middle" fill="#000">[4]</text><rect x="770.5" y="841.5" width="18" height="15" fill="#f3e6de" opacity="0.92"/><text x="779.5" y="853.3" font-size="12" text-anchor="middle" fill="#f37021">[5]</text></g><g fill="none" stroke="#1a1a1a" stroke-width="1.3"><path d="M1217.5 166V178H1229.5M1213.7 169.3H1226.2V181.8"/><path d="M1239 171.3L1242.5 174.8L1246 171.3M1284.2 171.3L1287.7 174.8L1291.2 171.3" stroke-width="1.1"/><path d="M1266.5 168.2Q1259 170 1259.3 176.5Q1259.8 181.6 1264 181.2M1262.5 166.5L1266.6 168.2L1264.6 172.2"/><path d="M1267.5 179.6Q1275 177.8 1274.7 171.3Q1274.2 166.2 1270 166.6M1271.5 181.3L1267.4 179.6L1269.4 175.6"/><path d="M1304.8 170.4H1316.4V181.5H1304.8ZM1304.8 170.4L1309 166.4H1320.4V177.2L1316.4 181.5M1316.4 170.4L1320.4 166.4" stroke-width="1.2"/><path d="M1309 166.4V177.2H1320.4M1309 177.2L1304.8 181.5" stroke-width="0.9"/><path d="M1361 170.3L1365.6 179.2L1376.6 173.6V169.2L1371.2 168.2ZM1361 170.3L1365.8 172.2L1376.6 169.2M1365.8 172.2V179"/></g><path d="M1331.6 170.6L1336 166.3H1347.6V177L1343.2 181.6H1331.6Z" fill="#000"/><path d="M1343.4 170.8L1347.2 167" stroke="#777" stroke-width="0.7"/><g fill="none" stroke="#3a3a3a" stroke-width="1.05"><path d="M1387.6 174.4L1395 167.3L1402.4 174.4M1389.6 172.8V181H1393.2V176H1396.8V181H1400.4V172.8"/><path d="M1413.6 170.6V166.3H1418M1413.6 166.3L1418.2 170.8M1425.4 166.3H1429.8V170.6M1429.8 166.3L1425.2 170.8M1413.6 177V181.4H1418M1413.6 181.4L1418.2 176.8M1429.8 177V181.4H1425.4M1429.8 181.4L1425.2 176.8"/></g><path fill-rule="evenodd" fill="#e2e2e2" d="M1342.5 233.3a38 21.6 0 1 0 76 0a38 21.6 0 1 0 -76 0ZM1351.5 231.6a29 15 0 1 0 58 0a29 15 0 1 0 -58 0Z"/><polygon points="1375,191.1 1405,197.7 1401.2,226.1 1387.1,244.9 1356.9,233.6 1354,202.4" fill="#b0b0b0"/><polygon points="1354,202.4 1388.7,210.5 1387.1,244.9 1356.9,233.6" fill="#a6a6a6"/><polygon points="1388.7,210.5 1405,197.7 1401.2,226.1 1387.1,244.9" fill="#a9a9a9"/><g fill="none" stroke="#848484" stroke-width="1"><polygon points="1375,191.1 1405,197.7 1388.7,210.5 1354,202.4"/><polyline points="1354,202.4 1356.9,233.6 1387.1,244.9 1401.2,226.1 1405,197.7"/><polyline points="1388.7,210.5 1387.1,244.9"/><polyline points="1375,191.1 1375.4,218.6 1356.9,233.6"/><polyline points="1375.4,218.6 1401.2,226.1"/></g><g stroke="#8a8a8a" stroke-width="0.9" fill="none"><path d="M1410 238.8L1420 242" stroke-dasharray="2.4 1"/></g><g stroke="#f2f2f2" stroke-width="1.2" fill="none"><path d="M1379.2 201.4L1382.8 199.4M1396 222.4L1397.6 217.6"/></g><text transform="translate(1349.8 251.3) rotate(47) scale(0.92 1.04)" font-size="16" font-weight="700" fill="#7c7c7c">Y</text><text transform="translate(1346.4 221) rotate(-14) scale(1 0.85)" font-size="8.5" font-weight="700" fill="#858585">-X</text><text x="1367.4" y="228.6" font-size="8.6" font-weight="700" fill="#f6f6f6">-Y</text><line x1="43.8" y1="1068" x2="55" y2="1058" stroke="#1f8a1f" stroke-width="2.6"/><path d="M50.2 1056.2L63.6 1051L57.4 1063.4Z" fill="#0d8a0d"/><line x1="43.8" y1="1068.2" x2="62" y2="1073.4" stroke="#e81818" stroke-width="2.6"/><path d="M62.4 1069L77.6 1077.4L60.6 1078.4Z" fill="#ff1a1a"/><line x1="43.8" y1="1068" x2="43.8" y2="1048" stroke="#1a1af0" stroke-width="2.8"/><path d="M39 1049.6L43.8 1034.6L48.8 1049.6Z" fill="#1414f0"/><circle cx="43.4" cy="1068.2" r="4.4" fill="#7a7a7a"/><circle cx="42.4" cy="1067" r="1.8" fill="#b4b4b4"/></svg>
<span class="t" style="left:7.2px;top:32.64px;font-size:12px;font-weight:700;letter-spacing:0.02px;">Nonconformities:</span>
<span class="t" style="left:32.9px;top:50.64px;font-size:12px;color:#111;letter-spacing:0.06px;">No reinforcement is defined in the model...</span>
<svg class="a" style="left:5px;top:46px;" width="20" height="21" viewBox="5 207 20 21" ><defs><radialGradient id="erg" cx="0.5" cy="0.5" r="0.5"><stop offset="0" stop-color="#f0562a"/><stop offset="0.62" stop-color="#f6733f"/><stop offset="1" stop-color="#fbb695"/></radialGradient></defs><circle cx="15" cy="217.6" r="8.1" fill="url(#erg)"/><path d="M12 214.6L18 220.6M18 214.6L12 220.6" stroke="#fff" stroke-width="2.4" stroke-linecap="round"/></svg>
<span class="t" style="left:46.78px;top:860.13px;font-size:12.6px;color:#111;transform:scaleX(0.8312);">Z</span>
<span class="t" style="left:63.53px;top:875.53px;font-size:12.6px;color:#111;transform:scaleX(0.9091);">Y</span>
<span class="t" style="left:77.93px;top:901.73px;font-size:12.6px;color:#111;transform:scaleX(0.8961);">X</span>
</main>
<aside id="tree" style="left:1250px;top:285px;width:186px;height:405px;">
<div class="sel" style="left:45.5px;top:91px;width:121px;height:21px;background:#f37021;"></div>
<span class="t ti" style="left:29.7px;top:7.84px;font-size:12px;font-weight:700;color:#3c3c3c;letter-spacing:0.02px;">Detail1</span>
<span class="t ti" style="left:50.7px;top:29.84px;font-size:12px;font-weight:700;color:#3c3c3c;letter-spacing:0.05px;">Members</span>
<span class="t ti" style="left:50.74px;top:51.84px;font-size:12px;color:#5a5a5a;transform:scaleX(0.8833);">CB 1</span>
<span class="t ti" style="left:50.7px;top:73.84px;font-size:12px;font-weight:700;color:#3c3c3c;letter-spacing:-0.13px;">Supports</span>
<span class="t ti" style="left:50.36px;top:95.44px;font-size:12px;color:#fff;transform:scaleX(0.8111);">SS1</span>
<span class="t ti" style="left:51.07px;top:117.84px;font-size:12px;font-weight:700;color:#3c3c3c;transform:scaleX(0.9546);">Transfer devices</span>
<span class="t ti" style="left:50.73px;top:139.44px;font-size:12px;color:#5a5a5a;transform:scaleX(0.894);">BP1</span>
<span class="t ti" style="left:51.65px;top:161.44px;font-size:12px;color:#5a5a5a;transform:scaleX(0.9283);">AN1</span>
<span class="t ti" style="left:51.66px;top:183.44px;font-size:12px;color:#5a5a5a;transform:scaleX(0.9451);">AN2</span>
<span class="t ti" style="left:51.66px;top:205.44px;font-size:12px;color:#5a5a5a;transform:scaleX(0.9451);">AN3</span>
<span class="t ti" style="left:51.67px;top:227.44px;font-size:12px;color:#5a5a5a;transform:scaleX(0.9536);">AN4</span>
<span class="t ti" style="left:50.7px;top:249.44px;font-size:12px;font-weight:700;color:#3c3c3c;letter-spacing:-0.13px;">Loads and Combin...</span>
<span class="t ti" style="left:71.72px;top:271.04px;font-size:12px;font-weight:700;color:#3c3c3c;transform:scaleX(0.9181);">Load cases</span>
<span class="t ti" style="left:71.4px;top:293.04px;font-size:12px;color:#5a5a5a;letter-spacing:0.42px;">C+V+M</span>
<span class="t ti" style="left:71.4px;top:315.04px;font-size:12px;color:#5a5a5a;letter-spacing:0.05px;">C+V</span>
<span class="t ti" style="left:71.4px;top:337.04px;font-size:12px;font-weight:700;color:#3c3c3c;letter-spacing:-0.04px;">Strength</span>
<span class="t ti" style="left:93.5px;top:361.04px;font-size:12px;color:#5a5a5a;letter-spacing:0.42px;">C+V+M</span>
<span class="t ti" style="left:93.5px;top:383.04px;font-size:12px;color:#5a5a5a;letter-spacing:0.05px;">C+V</span>
<svg class="a" style="left:0px;top:0px;" width="186" height="405" viewBox="1250 285 186 405" ><path d="M1259.6 297.2l4.1 4.1l4.1 -4.1" fill="none" stroke="#f37021" stroke-width="1.1" stroke-opacity="0.88"/><path d="M1280.6 319.2l4.1 4.1l4.1 -4.1" fill="none" stroke="#f37021" stroke-width="1.1" stroke-opacity="0.88"/><path d="M1280.6 363.2l4.1 4.1l4.1 -4.1" fill="none" stroke="#f37021" stroke-width="1.1" stroke-opacity="0.88"/><path d="M1280.6 407.2l4.1 4.1l4.1 -4.1" fill="none" stroke="#f37021" stroke-width="1.1" stroke-opacity="0.88"/><path d="M1280.6 539l4.1 4.1l4.1 -4.1" fill="none" stroke="#f37021" stroke-width="1.1" stroke-opacity="0.88"/><path d="M1301.4 561l4.1 4.1l4.1 -4.1" fill="none" stroke="#f37021" stroke-width="1.1" stroke-opacity="0.88"/><path d="M1301.4 627l4.1 4.1l4.1 -4.1" fill="none" stroke="#f37021" stroke-width="1.1" stroke-opacity="0.88"/><rect x="1322.3" y="645.7" width="11" height="11" fill="#fff" stroke="#e3e3e3"/><path d="M1324.4 651.4l2.7 2.6l4.5 -5.2" fill="none" stroke="#f47a30" stroke-width="1.5" stroke-linecap="round"/><rect x="1322.3" y="667.7" width="11" height="11" fill="#fff" stroke="#e3e3e3"/><path d="M1324.4 673.4l2.7 2.6l4.5 -5.2" fill="none" stroke="#f47a30" stroke-width="1.5" stroke-linecap="round"/></svg>
</aside>
<div id="splitter"></div>
<section id="props" style="left:1442px;top:161px;width:473px;height:955px;background:#fff;">
<div id="props-head" style="left:0px;top:0px;width:473px;height:25px;background:#f37021;">
<span class="t" style="left:9.42px;top:7.04px;font-size:12px;font-weight:700;color:#fff;transform:scaleX(0.9217);">SS1</span>
<span class="t" style="left:40.7px;top:7.04px;font-size:12px;color:#fff;letter-spacing:0.24px;">[Support]</span>
<a class="t" style="left:322.68px;top:7.04px;font-size:12px;font-weight:700;color:#fff;transform:scaleX(1.0802);">New</a>
<a class="t" style="left:368.43px;top:7.04px;font-size:12px;font-weight:700;color:#fff;transform:scaleX(0.9057);">Copy</a>
<a class="t" style="left:416.38px;top:7.04px;font-size:12px;font-weight:700;color:#fff;transform:scaleX(1.0605);">Delete</a>
</div>

<span class="t" style="left:33.41px;top:40.64px;font-size:12px;font-weight:700;color:#3c3c3c;transform:scaleX(0.964);">Surface support</span>
<span class="t" style="left:33.4px;top:67.64px;font-size:12px;color:#4a4a4a;letter-spacing:0.09px;">Direction</span>
<div style="left:125.7px;top:61px;width:44px;height:19.6px;background:#d2d2d2;"></div>
<span class="t" style="left:133.9px;top:64.64px;font-size:12px;color:#333;letter-spacing:-0.03px;">Local</span>
<span class="t" style="left:176.9px;top:64.64px;font-size:12px;color:#333;letter-spacing:-0.06px;">Global</span>
<span class="t" style="left:33.6px;top:89.04px;font-size:12px;color:#4a4a4a;transform:scaleX(1.0149);">X</span>
<div class="inp" style="left:169px;top:84.8px;width:209px;height:19.4px;background:#efefef;border-bottom:1px solid #e2e2e2;box-sizing:border-box;"></div>
<span class="t" style="left:172.92px;top:89.64px;font-size:12px;color:#a8a8a8;transform:scaleX(0.9174);">24866</span>
<span class="t" style="left:408.26px;top:89.04px;font-size:12px;color:#222;transform:scaleX(1.1311);">MN/in/in</span>
<sup class="t" style="left:458.6px;top:88.7px;font-size:6.5px;color:#222;">2</sup>
<span class="t" style="left:33.6px;top:113.04px;font-size:12px;color:#4a4a4a;transform:scaleX(0.9851);">Y</span>
<div class="inp" style="left:169px;top:108.8px;width:209px;height:19.4px;background:#efefef;border-bottom:1px solid #e2e2e2;box-sizing:border-box;"></div>
<span class="t" style="left:172.92px;top:113.64px;font-size:12px;color:#a8a8a8;transform:scaleX(0.9174);">24866</span>
<span class="t" style="left:408.26px;top:113.04px;font-size:12px;color:#222;transform:scaleX(1.1311);">MN/in/in</span>
<sup class="t" style="left:458.6px;top:112.7px;font-size:6.5px;color:#222;">2</sup>
<span class="t" style="left:34.52px;top:137.04px;font-size:12px;color:#4a4a4a;transform:scaleX(0.8831);">Z</span>
<div class="inp" style="left:169px;top:132.8px;width:209px;height:19.4px;background:#efefef;border-bottom:1px solid #e2e2e2;box-sizing:border-box;"></div>
<span class="t" style="left:172.92px;top:137.64px;font-size:12px;color:#a8a8a8;transform:scaleX(0.9174);">24866</span>
<span class="t" style="left:408.26px;top:137.04px;font-size:12px;color:#222;transform:scaleX(1.1311);">MN/in/in</span>
<sup class="t" style="left:458.6px;top:136.7px;font-size:6.5px;color:#222;">2</sup>
<span class="t" style="left:33.42px;top:172.24px;font-size:12px;font-weight:700;color:#3c3c3c;transform:scaleX(0.9379);">Position</span>
<span class="t" style="left:33.4px;top:197.24px;font-size:12px;color:#4a4a4a;letter-spacing:0.06px;">Master</span>
<div class="dd" style="left:126px;top:192.8px;width:335.6px;height:19.4px;background:#fff;border:1px solid #d4d4d4;box-sizing:border-box;"></div>
<span class="t" style="left:131.93px;top:196.44px;font-size:12px;color:#111;transform:scaleX(0.9105);">CB 1</span>
<span class="t" style="left:33.41px;top:221.44px;font-size:12px;color:#4a4a4a;transform:scaleX(0.9533);">Surface</span>
<div class="dd" style="left:126px;top:217px;width:335.6px;height:19.4px;background:#fff;border:1px solid #d4d4d4;box-sizing:border-box;"></div>
<span class="t" style="left:131.92px;top:220.64px;font-size:12px;color:#111;transform:scaleX(0.9474);">5</span>
<span class="t" style="left:33.4px;top:245.04px;font-size:12px;color:#4a4a4a;letter-spacing:0.03px;">Geometry type</span>
<div class="dd" style="left:126px;top:240.8px;width:335.6px;height:19.4px;background:#fff;border:1px solid #d4d4d4;box-sizing:border-box;"></div>
<span class="t" style="left:132.9px;top:244.44px;font-size:12px;color:#111;letter-spacing:-0.16px;">Whole surface</span>
<svg class="a" style="left:0px;top:0px;" width="473" height="955" viewBox="1442 161 473 955" ><rect x="1568.1" y="251.3" width="11" height="11" fill="#fff" stroke="#e3e3e3"/><path d="M1570.2 257l2.7 2.6l4.5 -5.2" fill="none" stroke="#f47a30" stroke-width="1.5" stroke-linecap="round"/><g transform="translate(1827 247.4)" fill="none" stroke="#1a1a1a" stroke-width="1.3" stroke-linejoin="round"><path d="M1 15.2L2 10.6L10.9 1.7Q12 0.6 13.2 1.7L14.7 3.2Q15.7 4.4 14.7 5.5L5.7 14.3Z"/><path d="M9.3 3.4L13 7.1"/></g><rect x="1568.1" y="275.3" width="11" height="11" fill="#fff" stroke="#e3e3e3"/><path d="M1570.2 281l2.7 2.6l4.5 -5.2" fill="none" stroke="#f47a30" stroke-width="1.5" stroke-linecap="round"/><g transform="translate(1827 271.4)" fill="none" stroke="#1a1a1a" stroke-width="1.3" stroke-linejoin="round"><path d="M1 15.2L2 10.6L10.9 1.7Q12 0.6 13.2 1.7L14.7 3.2Q15.7 4.4 14.7 5.5L5.7 14.3Z"/><path d="M9.3 3.4L13 7.1"/></g><rect x="1568.1" y="299.3" width="11" height="11" fill="#fff" stroke="#e3e3e3"/><path d="M1570.2 305l2.7 2.6l4.5 -5.2" fill="none" stroke="#f47a30" stroke-width="1.5" stroke-linecap="round"/><g transform="translate(1827 295.4)" fill="none" stroke="#1a1a1a" stroke-width="1.3" stroke-linejoin="round"><path d="M1 15.2L2 10.6L10.9 1.7Q12 0.6 13.2 1.7L14.7 3.2Q15.7 4.4 14.7 5.5L5.7 14.3Z"/><path d="M9.3 3.4L13 7.1"/></g><path d="M1889.2 361l4.4 4.4l4.4 -4.4" fill="none" stroke="#333" stroke-width="1.2"/><path d="M1889.2 385.2l4.4 4.4l4.4 -4.4" fill="none" stroke="#333" stroke-width="1.2"/><path d="M1889.2 409l4.4 4.4l4.4 -4.4" fill="none" stroke="#333" stroke-width="1.2"/><path d="M1459.6 205.4l4.1 4.1l4.1 -4.1" fill="none" stroke="#f37021" stroke-width="1.1" stroke-opacity="0.88"/><path d="M1459.6 337l4.1 4.1l4.1 -4.1" fill="none" stroke="#f37021" stroke-width="1.1" stroke-opacity="0.88"/><g fill="none" stroke="#111" stroke-width="1.1"><path d="M1591.2 300.4L1595.1 296.2L1599 300.4ZM1595.1 300.4V311.6"/></g><path d="M1592.6 308L1595.1 303L1597.6 308L1595.6 307.4V311.6H1594.6V307.4Z" fill="#111" stroke="#111" stroke-width="0.6"/><g fill="none" stroke="#fd3535" stroke-width="4"><rect x="1607.8" y="236" width="305.2" height="93" rx="5.5" stroke-width="4.3"/><rect x="1586" y="283.5" width="17" height="36.5" rx="5" stroke-width="4.4"/><path d="M1629.2 451.6L1595.6 336M1591 343.2L1594.8 333.4L1603.6 339.8" stroke-width="3.6" stroke-linecap="round" stroke-linejoin="round"/></g><rect x="1477" y="453.2" width="305" height="93" rx="5" fill="#fff" stroke="#fd3535" stroke-width="4"/><rect x="1455.5" y="870.2" width="446.5" height="1" fill="#dcdcdc"/><defs><linearGradient id="fade" x1="0" x2="1"><stop offset="0" stop-color="#f29a6a"/><stop offset="0.66" stop-color="#f29a6a"/><stop offset="0.95" stop-color="#fff"/></linearGradient></defs><path d="M1587 976H1641V994.6H1604.6L1598.4 984.2H1587Z" fill="url(#fade)" stroke="#333" stroke-width="0.8"/><path d="M1598.6 983.8L1604.4 980.4H1641" fill="none" stroke="#555" stroke-width="0.7"/><path d="M1624.8 972.6V998" stroke="#111" stroke-width="1.3"/><path d="M1637.6 983.6L1643.6 985L1640.6 986.2" fill="none" stroke="#222" stroke-width="0.8"/><rect x="1714.4" y="967.8" width="60.2" height="39" fill="#f8a472" stroke="#3a2a20" stroke-width="0.8"/></svg>
<span class="t callout" style="left:70.4px;top:309.14px;font-size:27px;font-weight:700;color:#f37021;letter-spacing:0.29px;">Inactive in tension</span>
<span class="t callout" style="left:139.7px;top:347.34px;font-size:27px;font-weight:700;color:#f37021;letter-spacing:0.54px;">(default)</span>
<span class="t" style="left:228.57px;top:811.99px;font-size:26px;font-weight:700;color:#c8c8c8;transform:scaleX(1.1024);">?</span>
</section>
<footer id="statusbar" style="left:0px;top:1116px;width:1915px;height:31px;background:#000;">
<span class="t" style="left:3.91px;top:10.04px;font-size:12px;color:#fff;transform:scaleX(0.9637);">Design Code: ACI</span>
<span class="t" style="left:110.9px;top:10.04px;font-size:12px;color:#fff;letter-spacing:0.04px;">Rounding: Metric</span>
<span class="t" style="left:217.9px;top:10.04px;font-size:12px;color:#fff;letter-spacing:-0.14px;">Presentation Units: Custom</span>
</footer>
</div>
</body>
</html>
